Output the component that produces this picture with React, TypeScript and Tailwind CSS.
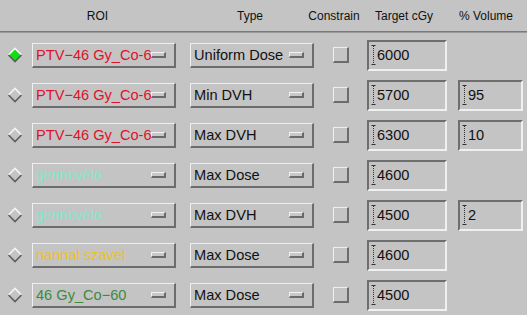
import React from "react";

type Row = {
  roi: string;
  color: string;
  type: string;
  target: string;
  volume?: string;
  selected?: boolean;
};

const rows: Row[] = [
  { roi: "PTV\u221246 Gy_Co-60", color: "text-[#e0102a]", type: "Uniform Dose", target: "6000", selected: true },
  { roi: "PTV\u221246 Gy_Co-60", color: "text-[#e0102a]", type: "Min DVH", target: "5700", volume: "95" },
  { roi: "PTV\u221246 Gy_Co-60", color: "text-[#e0102a]", type: "Max DVH", target: "6300", volume: "10" },
  { roi: "gerincvelo", color: "text-[#86e6cc]", type: "Max Dose", target: "4600" },
  { roi: "gerincvelo", color: "text-[#86e6cc]", type: "Max DVH", target: "4500", volume: "2" },
  { roi: "nannal szavel", color: "text-[#ecc21e]", type: "Max Dose", target: "4600" },
  { roi: "46 Gy_Co\u221260", color: "text-[#3d8a3d]", type: "Max Dose", target: "4500" },
];

function Diamond({ selected }: { selected?: boolean }) {
  return (
    <svg width="16" height="16" viewBox="0 0 16 16" className="block">
      <polygon points="8,1 15,8 8,15 1,8" fill={selected ? "#10e010" : "#c4c4c4"} />
      <polyline points="1.5,8 8,1.5 14.5,8" fill="none" stroke="#f4f4f4" strokeWidth="1.6" />
      <polyline points="1.5,8 8,14.5 14.5,8" fill="none" stroke="#5e5e5e" strokeWidth="1.6" />
    </svg>
  );
}

function Indicator() {
  return (
    <span className="block h-[6px] w-[15px] shrink-0 border-t border-l border-[#f2f2f2] border-r-2 border-b-2 border-r-[#6a6a6a] border-b-[#6a6a6a] bg-[#c8c8c8]" />
  );
}

function OptionButton({ text, className, width }: { text: string; className: string; width: string }) {
  return (
    <div
      className={`flex h-[25px] ${width} items-center border-t border-l border-[#efefef] border-r-2 border-b-2 border-r-[#6c6c6c] border-b-[#6c6c6c] pl-[3px] pr-[8px]`}
    >
      <span className={`min-w-0 flex-1 overflow-hidden whitespace-nowrap text-[14.6px] leading-[18px] ${className}`}>{text}</span>
      <Indicator />
    </div>
  );
}

function Cursor() {
  return (
    <svg width="5" height="20" viewBox="0 0 5 20" className="block shrink-0">
      <line x1="0.5" y1="0.5" x2="4.5" y2="0.5" stroke="#303030" />
      <line x1="0.5" y1="19.5" x2="4.5" y2="19.5" stroke="#303030" />
      <line x1="2.5" y1="1" x2="2.5" y2="19" stroke="#303030" strokeDasharray="1 1" />
    </svg>
  );
}

function Field({ value, width }: { value: string; width: string }) {
  return (
    <div
      className={`flex h-[31px] ${width} items-center border-t-2 border-l-2 border-t-[#6e6e6e] border-l-[#6e6e6e] border-b-2 border-r-2 border-b-[#f0f0f0] border-r-[#f0f0f0] pl-[2px]`}
    >
      <Cursor />
      <span className="ml-[1px] text-[14.6px] leading-[18px] text-[#111]">{value}</span>
    </div>
  );
}

export default function App() {
  return (
    <div className="h-[315px] w-[527px] overflow-hidden bg-[#c4c4c4] font-['Liberation_Sans',Arial,sans-serif] text-[14px] leading-none">
      <div className="flex h-[31px] items-center text-[12px] text-[#111]">
        <span className="w-[195px] text-center">ROI</span>
        <span className="w-[110px] text-center">Type</span>
        <span className="w-[58px] text-center">Constrain</span>
        <span className="w-[82px] text-center">Target cGy</span>
        <span className="w-[82px] text-center">% Volume</span>
      </div>
      <div className="h-[2px] border-t border-[#7a7a7a] bg-[#9a9a9a]" />
      <div className="flex flex-col pt-[2px]">
        {rows.map((r, i) => (
          <div key={i} className="flex h-[40px] items-center">
            <div className="flex w-[32px] justify-center pl-[1px] pr-[4px]">
              <Diamond selected={r.selected} />
            </div>
            <OptionButton text={r.roi} className={r.color} width="w-[144px]" />
            <div className="w-[14px]" />
            <OptionButton text={r.type} className="text-[#111]" width="w-[124px]" />
            <div className="flex w-[53px] justify-center">
              <span className="block h-[16px] w-[16px] border-t border-l border-[#efefef] border-r-2 border-b-2 border-r-[#6c6c6c] border-b-[#6c6c6c]" />
            </div>
            <Field value={r.target} width="w-[80px]" />
            <div className="w-[11px]" />
            {r.volume ? <Field value={r.volume} width="w-[65px]" /> : null}
          </div>
        ))}
      </div>
    </div>
  );
}
